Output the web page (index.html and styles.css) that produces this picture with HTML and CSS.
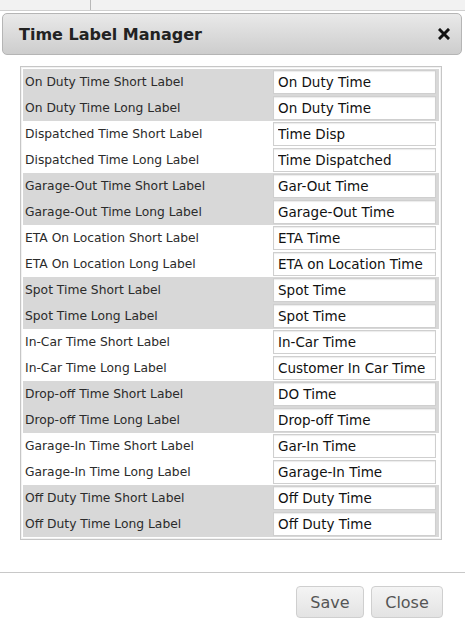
FILE: index.html
```html
<!DOCTYPE html>
<html>
<head>
<meta charset="utf-8">
<link rel="stylesheet" href="styles.css">
</head>
<body>
<div class="backdrop"><div class="backdrop-tab"></div></div>
<div class="dialog">
  <div class="titlebar">
    <span class="title">Time Label Manager</span>
    <svg class="close-x" width="12" height="12" viewBox="0 0 12 12"><path d="M2 2 L10 10 M10 2 L2 10" stroke="#111" stroke-width="3" stroke-linecap="square"/></svg>
  </div>
  <div class="body">
    <div class="grid">
      <div class="row gray"><span class="lbl">On Duty Time Short Label</span><input class="fld" value="On Duty Time"></div>
      <div class="row gray"><span class="lbl">On Duty Time Long Label</span><input class="fld" value="On Duty Time"></div>
      <div class="row"><span class="lbl">Dispatched Time Short Label</span><input class="fld" value="Time Disp"></div>
      <div class="row"><span class="lbl">Dispatched Time Long Label</span><input class="fld" value="Time Dispatched"></div>
      <div class="row gray"><span class="lbl">Garage-Out Time Short Label</span><input class="fld" value="Gar-Out Time"></div>
      <div class="row gray"><span class="lbl">Garage-Out Time Long Label</span><input class="fld" value="Garage-Out Time"></div>
      <div class="row"><span class="lbl">ETA On Location Short Label</span><input class="fld" value="ETA Time"></div>
      <div class="row"><span class="lbl">ETA On Location Long Label</span><input class="fld" value="ETA on Location Time"></div>
      <div class="row gray"><span class="lbl">Spot Time Short Label</span><input class="fld" value="Spot Time"></div>
      <div class="row gray"><span class="lbl">Spot Time Long Label</span><input class="fld" value="Spot Time"></div>
      <div class="row"><span class="lbl">In-Car Time Short Label</span><input class="fld" value="In-Car Time"></div>
      <div class="row"><span class="lbl">In-Car Time Long Label</span><input class="fld" value="Customer In Car Time"></div>
      <div class="row gray"><span class="lbl">Drop-off Time Short Label</span><input class="fld" value="DO Time"></div>
      <div class="row gray"><span class="lbl">Drop-off Time Long Label</span><input class="fld" value="Drop-off Time"></div>
      <div class="row"><span class="lbl">Garage-In Time Short Label</span><input class="fld" value="Gar-In Time"></div>
      <div class="row"><span class="lbl">Garage-In Time Long Label</span><input class="fld" value="Garage-In Time"></div>
      <div class="row gray"><span class="lbl">Off Duty Time Short Label</span><input class="fld" value="Off Duty Time"></div>
      <div class="row gray"><span class="lbl">Off Duty Time Long Label</span><input class="fld" value="Off Duty Time"></div>
    </div>
  </div>
  <div class="footer">
    <button class="btn btn-save">Save</button>
    <button class="btn btn-close">Close</button>
  </div>
</div>
</body>
</html>
```
FILE: styles.css
```css
html, body {
  margin: 0;
  padding: 0;
  background: #ffffff;
  width: 465px;
  height: 623px;
  overflow: hidden;
  font-family: "DejaVu Sans", Verdana, sans-serif;
}
.backdrop {
  height: 10px;
  background: #f2f2f2;
  border-bottom: 1px solid #cfcfcf;
}
.backdrop-tab {
  margin-left: 90px;
  width: 1px;
  height: 10px;
  background: #b8b8b8;
}
.dialog {
  margin-top: 2px;
}
.titlebar {
  margin-left: 2px;
  height: 40px;
  border: 1px solid #b5b5b5;
  border-radius: 5px;
  background: linear-gradient(#e9e9e9, #cdcdcd);
  display: flex;
  align-items: center;
  justify-content: space-between;
  padding: 0 11px 0 16px;
  box-sizing: content-box;
  width: 431px;
}
.title {
  font-weight: bold;
  font-size: 16px;
  color: #222;
}
.close-x {
  display: block;
}
.body {
  padding: 11px 0 0 20px;
  height: 506px;
}
.grid {
  width: 416px;
  border: 1px solid #c6c6c6;
  padding: 2px;
  box-shadow: inset 0 0 0 1px #f2f2f2;
}
.row {
  height: 26px;
  display: flex;
  align-items: center;
}
.row.gray {
  background: #d8d8d8;
}
.lbl {
  width: 248px;
  padding-left: 2px;
  font-size: 12.3px;
  color: #2b2b2b;
}
.fld {
  width: 163px;
  height: 24px;
  box-sizing: border-box;
  border: 1px solid #cfcfcf;
  box-shadow: inset 0 1px 1px rgba(0,0,0,0.08);
  background: #fff;
  margin: 0;
  padding: 0 4px;
  font-family: "DejaVu Sans", Verdana, sans-serif;
  font-size: 13.5px;
  color: #111;
  outline: none;
}
.footer {
  border-top: 1px solid #c8c8c8;
  padding: 13px 22px 0 0;
  display: flex;
  justify-content: flex-end;
  gap: 7px;
}
.btn {
  height: 32px;
  border: 1px solid #cfcfcf;
  border-radius: 4px;
  background: linear-gradient(#f4f4f4, #e3e3e3);
  font-family: "DejaVu Sans", Verdana, sans-serif;
  font-size: 16px;
  color: #555;
  padding: 0;
  margin: 0;
}
.btn-save { width: 68px; }
.btn-close { width: 72px; }
```
